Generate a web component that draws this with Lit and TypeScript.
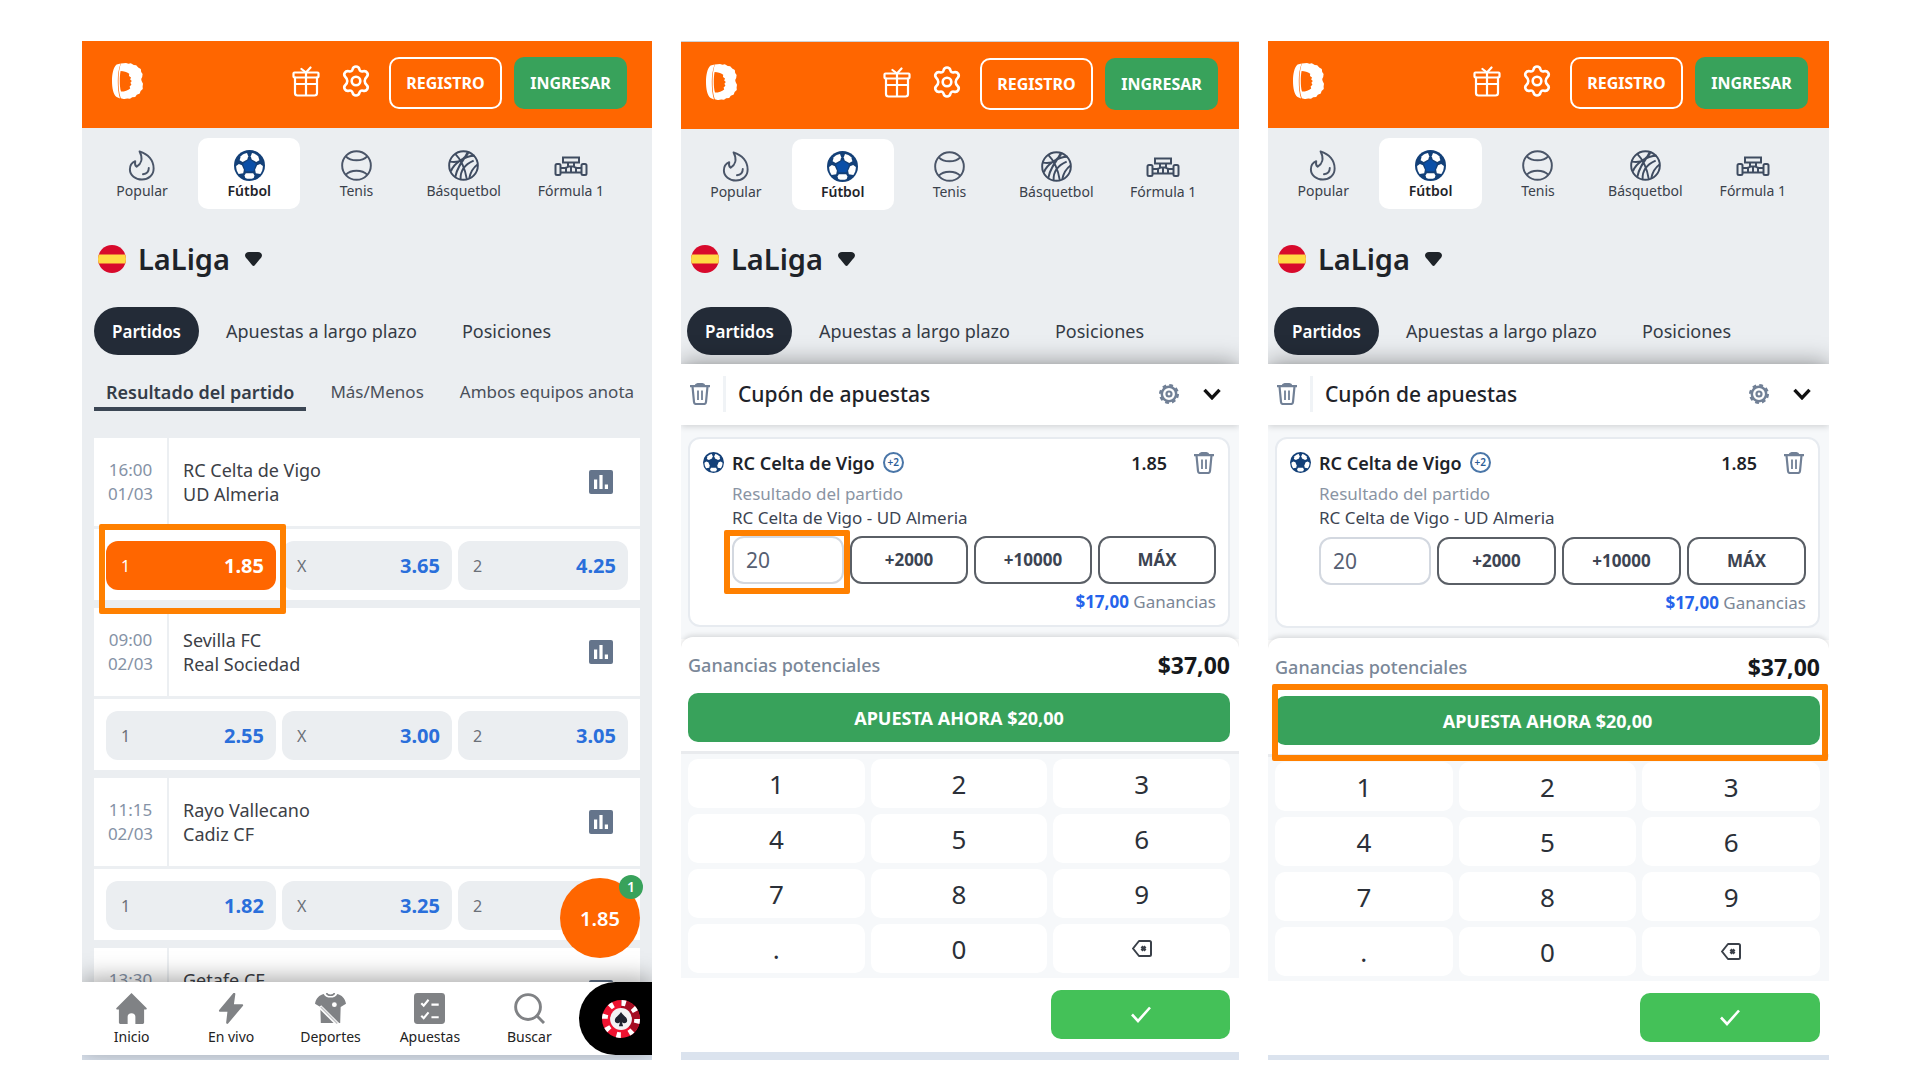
import { LitElement, html, css, nothing, type TemplateResult } from "lit";
import { customElement, property } from "lit/decorators.js";
import { classMap } from "lit/directives/class-map.js";

/* ---------- Icons ---------- */

const icons: Record<string, TemplateResult> = {
  logo: html`<svg viewBox="0 0 31 36" width="31" height="36" aria-hidden="true">
    <path fill="#fff" d="M8.600.6 4.600 1.600C1.300 4.500 0 11 0 18s1.300 13.500 4.600 16l3.400 1.400C6.300 30 5.800 24 5.800 18S6.600 6 8.600.6z"/>
    <path fill="#fff" fill-rule="evenodd" d="M8.800.6 14 0l2.500.7 2.300-.4 3 1.800 2.400.2 2 2.200 2.600 1.600.4 2.800 1.400 2.200-.4 3-1 2 .4 2 1.400 2.600-.4 2.800.2 2.400-2.200 2-.8 2.600-3 1.200-1.600 2.200-3 .4-2.200 1.400-2.800-.2-3.200.6-3.200-.8C6.900 30 6.500 24 6.500 18S7 6 8.800.6zM8.600 8C8 10.500 7.800 14.500 7.800 18s.3 7.500 1.200 10.600c3.800 0 7-1.200 9.200-3.200l-.6-2 1.800-1.600-1-2 1.400-1.800-1.600-1.600.8-2-2-1.400.2-2.200C14.600 8.800 11.800 8.100 8.600 8z"/>
  </svg>`,
  gift: html`<svg viewBox="0 0 28 31" width="28" height="31" fill="none" stroke="#fff" stroke-width="2.200" stroke-linecap="round" stroke-linejoin="round" aria-hidden="true">
    <rect x="1.500" y="6.500" width="25" height="5" rx="1"/><path d="M3 11.500V27a2.500 2.500 0 0 0 2.500 2.500h17A2.500 2.500 0 0 0 25 27V11.500M14 6.500v23M3 18h22M14 6.500 9.500 3M14 6.500 18.500 1.500"/>
  </svg>`,
  gear: html`<svg viewBox="1 0 30 32" width="32" height="32" fill="none" stroke="#fff" stroke-width="2.600" stroke-linejoin="round" aria-hidden="true">
    <path d="M12.600 4.200c.8-3.600 6-3.600 6.800 0 .4 1.900 1.900 2.700 3.700 2.100 3.500-1.100 6.200 3.200 3.500 5.700-1.400 1.300-1.900 2.700-1.900 4s.5 2.700 1.900 4c2.700 2.500 0 6.800-3.500 5.700-1.800-.6-3.300.2-3.700 2.100-.8 3.600-6 3.600-6.800 0-.4-1.900-1.900-2.700-3.700-2.100-3.500 1.100-6.200-3.200-3.500-5.700 1.400-1.300 1.900-2.700 1.900-4s-.5-2.700-1.900-4C2.700 9.500 5.400 5.200 8.900 6.300c1.800.6 3.300-.2 3.700-2.100z"/>
    <circle cx="16" cy="16" r="4.300"/>
  </svg>`,
  flame: html`<svg viewBox="0 0 28 32" width="28" height="31" fill="none" stroke="#4a5568" stroke-width="2" stroke-linecap="round" stroke-linejoin="round" aria-hidden="true">
    <path d="M11.500 1.500c9 2.500 14.500 9.500 14.500 17.500 0 7-5.300 11.500-12 11.500S1.500 26 1.500 20c0-4.200 2-7 5.500-8.500-.6 2.600-.2 4.600 1.500 5.800C13 14.500 15.500 9 11.500 1.500z"/><path d="M21 18.500c0 3.800-2.300 6-6 6.500"/>
  </svg>`,
  soccer: html`<svg viewBox="0 0 32 32" width="31" height="31" aria-hidden="true">
    <circle cx="16" cy="16" r="16" fill="#134078"/>
    <path fill="#0a4fa8" d="m16 9.500 6.600 4.800-2.500 7.700h-8.200l-2.500-7.700z"/>
    <g fill="#fff"><path d="M7 6.500c1.800-2 4-3.200 6.400-3.500l1.300 3.500-1 3.300-4.700 2.500-3.200-1.800z"/><path d="M25 6.500c-1.800-2-4-3.200-6.400-3.500l-1.300 3.500 1 3.300 4.700 2.500 3.200-1.800z"/><path d="M2.200 16.500c0 3.400 1 6 2.600 8.200l4.700-.8.7-3.400-2-4.800-3.200-1.200z"/><path d="M29.800 16.500c0 3.400-1 6-2.600 8.200l-4.700-.8-.7-3.400 2-4.800 3.200-1.200z"/><path d="M12.200 24h7.600l1.300 2.200-.8 2.600c-2.300 1.200-6.300 1.200-8.600 0l-.8-2.600z"/></g>
  </svg>`,
  tennis: html`<svg viewBox="0 0 32 32" width="31" height="31" fill="none" stroke="#4a5568" stroke-width="2" aria-hidden="true">
    <circle cx="16" cy="16" r="14.800"/><path d="M5 6.500c5 5.500 17 5.500 22 0M5 25.500c5-5.500 17-5.500 22 0"/>
  </svg>`,
  basket: html`<svg viewBox="0 0 32 32" width="31" height="31" fill="none" stroke="#3f4c61" stroke-width="2" aria-hidden="true">
    <circle cx="16" cy="16" r="14.800"/><path d="M7.500 4c5 5 10 14 12 26.500M2 12c8 1.500 15-1.500 18.500-10M3 22c3-8 14-16 24.500-16M7.500 28C9 19 14 12 21 3M13 30.500c-.5-8 3-15 13.500-19.500M22 29c1-5 3-10 8.500-14"/>
  </svg>`,
  racecar: html`<svg viewBox="0 0 34 31" width="34" height="31" fill="none" stroke="#3f4c61" stroke-width="2" aria-hidden="true">
    <rect x="1.500" y="14" width="5" height="11" rx="1.500"/><rect x="27.500" y="14" width="5" height="11" rx="1.500"/><path d="M9 7.500h16v5H9zM14 12.500v5M20 12.500v5M6.500 18h5l3-1.500h5l3 1.500h5M6.500 22.500h21M12 18v4M22 18v4M17 17v5"/>
  </svg>`,
  flag: html`<svg viewBox="0 0 28 28" width="28" height="28" aria-hidden="true">
    <clipPath id="round"><circle cx="14" cy="14" r="14"/></clipPath>
    <g clip-path="url(#round)"><path fill="#d80a2c" d="M0 0h28v28H0z"/><path fill="#ffda44" d="M0 9.500h28v9H0z"/></g>
  </svg>`,
  caret: html`<svg viewBox="0 0 17 14" width="17" height="14" aria-hidden="true">
    <path fill="#1e2329" d="M4 0h9c3 0 5 2.600 3.400 5.200-.4.700-1 1.200-1.500 1.800L10 13c-1 1.200-2 1.200-3 0L2.100 7C1.600 6.400 1 5.900.6 5.200C-1 2.600 1 0 4 0z"/>
  </svg>`,
  stats: html`<svg viewBox="0 0 24 24" width="24" height="24" aria-hidden="true">
    <rect width="24" height="24" rx="2" fill="#64748b"/><path fill="#fff" d="M5 9.500h3.200V19H5zM10.400 5h3.200v14h-3.200zM15.800 14.500H19V19h-3.200z"/>
  </svg>`,
  home: html`<svg viewBox="0 0 32 32" width="31" height="31" fill="#808285" aria-hidden="true">
    <path d="M16 0 31.500 15.500c.6.800.3 1.500-.6 1.500H29v13.500c0 .9-.6 1.500-1.500 1.500H20v-7.500c0-2.200-1.500-3.500-4-3.500s-4 1.300-4 3.500V32H4.500C3.600 32 3 31.400 3 30.500V17H1.100c-.9 0-1.200-.7-.6-1.500z"/>
  </svg>`,
  bolt: html`<svg viewBox="0 0 26 32" width="26" height="31" fill="#808285" aria-hidden="true">
    <path d="M15.500 0 .8 17.500c-.7 1 0 1.800 1 1.800h7.500L8 30.500c0 1.300 1.200 1.800 2 1L25.200 13.500c.8-1 .2-1.900-1-1.900H16L17.500 1c0-1.200-1.300-1.700-2-1z"/>
  </svg>`,
  shirt: html`<svg viewBox="0 0 32 32" width="31" height="31" aria-hidden="true">
    <path fill="#808285" d="M9 1c1.500 5 12.500 5 14 0 4.500 1 8 4.500 9 10l-5.500 3.500L26 31H6l-.5-16.500L0 11C1 5.500 4.500 2 9 1z"/>
    <path fill="none" stroke="#808285" stroke-width="1.600" d="M12 0c.5 3 7.500 3 8 0"/><path stroke="#fff" stroke-width="4" d="M5 14 24 33"/><path stroke="#c4c5c7" stroke-width="1.600" d="M6 14.500 23 31.500"/><circle cx="20" cy="12" r="2.500" fill="#fff"/>
  </svg>`,
  checklist: html`<svg viewBox="0 0 32 32" width="31" height="31" aria-hidden="true">
    <rect width="32" height="32" rx="3.500" fill="#808285"/><path fill="none" stroke="#fff" stroke-width="2.200" d="m7.500 10.500 2.500 2.500 5-6M18 12h7.500M7.500 23.500 10 26l5-6M18 25h7.500"/>
  </svg>`,
  search: html`<svg viewBox="0 0 32 32" width="31" height="31" fill="none" stroke="#808285" stroke-width="3" aria-hidden="true">
    <circle cx="14.500" cy="14.500" r="12.800"/><path d="m23 23 8 8"/>
  </svg>`,
  chip: html`<svg viewBox="0 0 40 40" width="38" height="38" aria-hidden="true">
    <circle cx="20" cy="20" r="20" fill="#ee1230"/><path fill="#a50d22" d="M20 0a20 20 0 0 1 14 34L20 20z"/>
    <circle cx="20" cy="20" r="17" fill="none" stroke="#fff" stroke-width="6" stroke-dasharray="4.600 8.752"/>
    <circle cx="20" cy="20" r="11.500" fill="#f3f3f5"/>
    <path fill="#1f2430" d="M20 12.500c2 3.500 6.500 5.500 6.500 9 0 3-3.500 3.800-5.500 2l1.200 4h-4.400l1.200-4c-2 1.800-5.500 1-5.500-2 0-3.500 4.500-5.500 6.500-9z"/>
  </svg>`,
  trash: html`<svg viewBox="0 0 20 22" width="20" height="22" fill="none" stroke="#718096" stroke-width="2.200" aria-hidden="true">
    <path d="M0 3.200h20M6 2c0-1.400 8-1.400 8 0M2.500 3.500 4 19c.1 1.300.8 2 2 2h8c1.200 0 1.900-.7 2-2l1.500-15.500"/><path stroke-width="1.800" d="M8 7.500v9.500M12 7.500v9.500"/>
  </svg>`,
  cog: html`<svg viewBox="0 0 32 32" width="20" height="20" fill="none" stroke="#718096" aria-hidden="true">
    <circle cx="16" cy="16" r="11.500" stroke-width="4"/><circle cx="16" cy="16" r="14" stroke-width="4" stroke-dasharray="6 4.996"/><circle cx="16" cy="16" r="4" stroke-width="3.500"/>
  </svg>`,
  chevron: html`<svg viewBox="0 0 18 12" width="18" height="12" fill="none" stroke="#111" stroke-width="3.400" aria-hidden="true">
    <path d="m1.500 1.800 7.500 8 7.500-8"/>
  </svg>`,
  backspace: html`<svg viewBox="0 0 20 17" width="20" height="17" fill="none" stroke="#3a4049" stroke-width="2" stroke-linejoin="round" aria-hidden="true">
    <path d="M7 1h10.500c.9 0 1.500.6 1.500 1.500v12c0 .9-.6 1.500-1.500 1.500H7L1 8.500z"/><path d="m9.500 6.500 4 4m0-4-4 4" stroke-width="2.600"/>
  </svg>`,
  check: html`<svg viewBox="0 0 20 17" width="20" height="17" fill="none" stroke="#fff" stroke-width="2.600" aria-hidden="true">
    <path d="m1 8.500 6 6.500L19 1.500"/>
  </svg>`,
};

const smallBall = html`<svg viewBox="0 0 32 32" width="21" height="21" aria-hidden="true">
  <circle cx="16" cy="16" r="16" fill="#134078"/>
  <g fill="#fff"><path d="M7 6.500c1.800-2 4-3.200 6.400-3.500l1.300 3.500-1 3.300-4.700 2.500-3.200-1.800z"/><path d="M25 6.500c-1.800-2-4-3.200-6.400-3.500l-1.300 3.500 1 3.300 4.700 2.500 3.200-1.800z"/><path d="M2.200 16.500c0 3.400 1 6 2.600 8.200l4.700-.8.7-3.400-2-4.800-3.200-1.200z"/><path d="M29.800 16.500c0 3.400-1 6-2.600 8.200l-4.700-.8-.7-3.400 2-4.800 3.200-1.200z"/><path d="M12.200 24h7.600l1.300 2.200-.8 2.600c-2.300 1.200-6.300 1.200-8.600 0l-.8-2.600z"/></g>
</svg>`;

/* ---------- Shared styles ---------- */

const base = css`
  *, *::before, *::after { box-sizing: border-box; }
  :host { display: block; font-family: "Noto Sans", "Open Sans", sans-serif; color: #1e2329; }
  button, input { font: inherit; color: inherit; margin: 0; padding: 0; border: 0; background: none; }
  button { cursor: pointer; }
  a { color: inherit; text-decoration: none; }
  h2, h3, p { margin: 0; font: inherit; }
  svg { display: block; flex: none; }
  .marked { position: relative; }
  .marked::after {
    content: "";
    position: absolute;
    inset: var(--mark);
    border: 6px solid #ff8000;
    border-radius: 2px;
    pointer-events: none;
    z-index: 2;
  }
`;

/* ---------- Top of every screen: brand bar, sports, league, sections ---------- */

const sports = [
  { icon: "flame", name: "Popular" },
  { icon: "soccer", name: "Fútbol", active: true },
  { icon: "tennis", name: "Tenis" },
  { icon: "basket", name: "Básquetbol" },
  { icon: "racecar", name: "Fórmula 1" },
];

@customElement("league-header")
class LeagueHeader extends LitElement {
  static styles = [
    base,
    css`
      .brand { display: flex; align-items: center; height: calc(87px + var(--rim, 0px)); background: #ff6600; border-top: var(--rim, 0px) solid #cfd2d6; padding: 0 var(--brand-right, 21px) 7px var(--brand-left, 25px); }
      .tools { display: flex; align-items: center; margin-left: auto; gap: 20px; }
      .auth { display: flex; gap: 12px; margin: 4px 0 0 -3px; }
      .auth button { height: 52px; width: 113px; border-radius: 10px; color: #fff; font-weight: 700; font-size: 16px; }
      .auth .register { border: 2px solid #fff; }
      .auth .login { background: #38a25b; }
      .sports { display: grid; grid-template-columns: repeat(5, minmax(0, 1fr)); gap: 5px; padding: 10px var(--sports-right, 25px) 0 var(--sports-left, 4px); }
      .sport { display: flex; flex-direction: column; align-items: center; height: 71px; padding-top: 12px; border-radius: 10px; font-size: 14px; line-height: 20px; color: #3a414b; }
      .sport.active { background: #fff; font-weight: 600; color: #1e2329; }
      .league { display: flex; align-items: center; gap: 12px; height: 40px; margin-top: calc(30px - var(--rim, 0px)); padding-left: var(--league-left, 10px); }
      .league h2 { font-size: 29px; font-weight: 600; line-height: 40px; margin-right: 3px; }
      .sections { display: flex; gap: 9px; margin-top: 28px; padding-left: var(--edge, 6px); }
      .section { height: 48px; padding: 0 18px; border-radius: 24px; font-size: 18px; white-space: nowrap; color: #343b45; }
      .section.active { background: #232b37; color: #fff; font-weight: 600; font-size: 17px; }
    `,
  ];

  render() {
    return html`
      <header class="brand">
        <a href="#" aria-label="Inicio">${icons.logo}</a>
        <div class="tools">
          <button aria-label="Promociones">${icons.gift}</button>
          <button aria-label="Ajustes">${icons.gear}</button>
          <div class="auth">
            <button class="register">REGISTRO</button>
            <button class="login">INGRESAR</button>
          </div>
        </div>
      </header>
      <nav class="sports">
        ${sports.map(
          (s) => html`<button class=${classMap({ sport: true, active: !!s.active })}>${icons[s.icon]}<span>${s.name}</span></button>`
        )}
      </nav>
      <div class="league">${icons.flag}<h2>LaLiga</h2><button aria-label="Cambiar liga">${icons.caret}</button></div>
      <nav class="sections">
        <button class="section active">Partidos</button>
        <button class="section">Apuestas a largo plazo</button>
        <button class="section">Posiciones</button>
      </nav>
    `;
  }
}

/* ---------- Match card ---------- */

interface Match {
  time: string;
  date?: string;
  home: string;
  away?: string;
  odds?: string[];
  picked?: number;
}

@customElement("match-card")
class MatchCard extends LitElement {
  @property({ attribute: false }) match!: Match;

  static styles = [
    base,
    css`
      :host { background: #fff; }
      .info { display: grid; grid-template-columns: 75px 1fr auto; align-items: center; height: 91px; border-bottom: 3px solid #eceff2; font-size: 17px; line-height: 24px; }
      .when { display: flex; flex-direction: column; justify-content: center; height: 100%; text-align: center; color: #8592a6; border-right: 2px solid #eceff2; }
      .line { display: block; min-height: 24px; }
      .teams { padding-left: 14px; font-size: 18px; color: #3c4046; }
      .stats { margin-right: 27px; }
      .odds { display: grid; grid-template-columns: repeat(3, minmax(0, 1fr)); gap: 6px; padding: 12px 12px 10px; }
      .odd { display: flex; justify-content: space-between; align-items: center; height: 49px; padding: 0 12px 0 15px; border-radius: 12px; background: #ebeef1; font-size: 16px; color: #6b7078; }
      .odd strong { font-size: 20px; font-weight: 700; color: #2a6fdb; }
      .odd.picked { background: #ff6600; color: #fff; --mark: -17px -10px -24px -7px; }
      .odd.picked strong { color: #fff; }
    `,
  ];

  render() {
    const m = this.match;
    return html`
      <div class="info">
        <div class="when"><span class="line">${m.time}</span><span class="line">${m.date}</span></div>
        <div class="teams"><span class="line">${m.home}</span><span class="line">${m.away}</span></div>
        <button class="stats" aria-label="Estadísticas">${icons.stats}</button>
      </div>
      ${m.odds
        ? html`<div class="odds">
            ${["1", "X", "2"].map((label, i) => {
              const picked = m.picked === i;
              return html`<button class=${classMap({ odd: true, picked, marked: picked })}>
                <span>${label}</span><strong>${m.odds?.[i]}</strong>
              </button>`;
            })}
          </div>`
        : nothing}
    `;
  }
}

/* ---------- Screen 1: list of matches ---------- */

const matches: Match[] = [
  { time: "16:00", date: "01/03", home: "RC Celta de Vigo", away: "UD Almeria", odds: ["1.85", "3.65", "4.25"], picked: 0 },
  { time: "09:00", date: "02/03", home: "Sevilla FC", away: "Real Sociedad", odds: ["2.55", "3.00", "3.05"] },
  { time: "11:15", date: "02/03", home: "Rayo Vallecano", away: "Cadiz CF", odds: ["1.82", "3.25"] },
  { time: "13:30", home: "Getafe CF" },
];

const destinations = [
  { icon: "home", name: "Inicio" },
  { icon: "bolt", name: "En vivo" },
  { icon: "shirt", name: "Deportes" },
  { icon: "checklist", name: "Apuestas" },
  { icon: "search", name: "Buscar" },
];

@customElement("match-screen")
class MatchScreen extends LitElement {
  static styles = [
    base,
    css`
      :host { display: flex; flex-direction: column; min-height: 0; overflow: hidden; background: #ebeef1; --edge: 12px; --sports-left: 9px; --sports-right: 30px; --league-left: 16px; --brand-left: 30px; --brand-right: 25px; }
      .markets { display: flex; gap: 12px; margin: 19px 10px 0 12px; overflow: hidden; }
      .market { flex: none; height: 37px; padding: 3px 12px 0; border-bottom: 4px solid transparent; font-size: 17px; line-height: 30px; color: #4a505a; }
      .market:last-child { padding-right: 0; }
      .market.active { font-size: 18px; font-weight: 600; color: #343c48; border-color: #3b4654; }
      .list { flex: 1; min-height: 0; overflow: hidden; display: flex; flex-direction: column; gap: 8px; margin-top: 27px; padding: 0 12px; }
      match-card { flex: none; }
      .dock { position: relative; display: flex; height: 73px; background: #fff; box-shadow: 0 -4px 22px rgba(0, 0, 0, 0.35); }
      .tabs { flex: 1; display: grid; grid-template-columns: repeat(5, 1fr); padding-top: 11px; }
      .tab { display: flex; flex-direction: column; align-items: center; gap: 3px; font-size: 14px; line-height: 20px; color: #222; }
      .casino { width: 73px; display: flex; align-items: center; justify-content: flex-end; padding-right: 12px; background: #000; border-radius: 37px 0 0 37px; }
      .slip { position: absolute; right: 12px; bottom: 97px; width: 80px; height: 80px; border-radius: 50%; background: #ff6600; color: #fff; font-size: 20px; font-weight: 600; }
      .count { position: absolute; top: -3px; right: -3px; width: 24px; height: 24px; border-radius: 50%; background: #38a25b; font-size: 14px; line-height: 24px; }
      .foot { height: 5px; background: #dbe3ee; }
    `,
  ];

  render() {
    return html`
      <league-header></league-header>
      <nav class="markets">
        <button class="market active">Resultado del partido</button>
        <button class="market">Más/Menos</button>
        <button class="market">Ambos equipos anota</button>
      </nav>
      <div class="list">${matches.map((m) => html`<match-card .match=${m}></match-card>`)}</div>
      <div class="dock">
        <nav class="tabs">
          ${destinations.map((d) => html`<a class="tab" href="#">${icons[d.icon]}<span>${d.name}</span></a>`)}
        </nav>
        <a class="casino" href="#" aria-label="Casino">${icons.chip}</a>
        <button class="slip">1.85<span class="count">1</span></button>
      </div>
      <div class="foot"></div>
    `;
  }
}

/* ---------- Screens 2 and 3: bet slip ---------- */

const keys = ["1", "2", "3", "4", "5", "6", "7", "8", "9", ".", "0"];

@customElement("slip-screen")
class SlipScreen extends LitElement {
  @property() highlight: "stake" | "submit" = "stake";

  static styles = [
    base,
    css`
      :host { display: flex; flex-direction: column; min-height: 0; overflow: hidden; background: #ebeef1; }
      :host([highlight="stake"]) { --rim: 1px; }
      .sheet { flex: 1; min-height: 0; display: flex; flex-direction: column; margin-top: 9px; background: #fff; box-shadow: 0 -2px 22px rgba(0, 0, 0, 0.35); position: relative; }
      .title { display: flex; align-items: center; height: 61px; padding: 0 18px 2px 9px; position: relative; box-shadow: 0 2px 6px rgba(0, 0, 0, 0.14); }
      .title h2 { margin-left: 13px; padding-left: 12px; border-left: 3px solid #f0f3f6; font-size: 21px; font-weight: 500; line-height: 36px; margin-right: auto; }
      .title .cog { margin-right: 24px; }
      .body { background: #f6f8fa; padding: 12px 9px 12px 7px; }
      .bet { border: 2px solid #e7ebf0; border-radius: 12px; background: #fff; padding: 11px 12px 11px 13px; }
      .pick { display: flex; align-items: center; height: 25px; padding-right: 2px; font-size: 18px; font-weight: 600; }
      .pick svg { margin-right: 8px; }
      .pick .odds { margin-left: auto; margin-right: 27px; }
      .pick button svg { margin: 0; }
      .plus { margin-left: 8px; width: 21px; height: 21px; border: 2px solid #4a76a8; border-radius: 50%; color: #2b5c97; font-size: 10px; line-height: 17px; text-align: center; }
      .details { padding-left: 29px; font-size: 17px; line-height: 24px; color: #3c4452; }
      .market { color: #8a94a3; margin-top: 7px; }
      .stakes { display: grid; grid-template-columns: 112px 1fr 1fr 1fr; gap: 6px; margin-top: 6px; }
      .stakes.roomy { margin-top: 7px; }
      .stake { height: 48px; border: 2px solid #d3d8e0; border-radius: 12px; display: flex; --mark: -8px -8px -12px -10px; }
      .stake input { width: 100%; padding: 0 12px; font-size: 21px; color: #566072; outline: none; border-radius: 10px; }
      .quick { height: 48px; border: 2px solid #5a5f66; border-radius: 12px; font-size: 17px; font-weight: 700; }
      .win { margin-top: 6px; text-align: right; color: #7b8696; }
      .win strong { color: #2563eb; font-weight: 700; }
      .totals { margin-top: -2px; background: #fff; border-radius: 12px 12px 0 0; box-shadow: 0 -2px 5px rgba(0, 0, 0, 0.12); padding: 0 9px 0 7px; }
      .sum { display: flex; justify-content: space-between; align-items: center; height: 56px; font-size: 18px; font-weight: 500; color: #7a8798; }
      .sum.roomy { height: 58px; }
      .sum strong { font-size: 23px; font-weight: 700; color: #15181c; }
      .bet-now { display: block; width: 100%; height: 49px; margin-bottom: 9px; border-radius: 10px; background: #38a25b; color: #fff; font-size: 18px; font-weight: 700; --mark: -12px -8px -16px -3px; }
      .pad { display: grid; grid-template-columns: repeat(3, minmax(0, 1fr)); gap: 6px; background: #f6f8fa; border-top: 3px solid #e9ebee; padding: 5px 9px 5px 7px; }
      .key { display: flex; align-items: center; justify-content: center; height: 49px; border-radius: 10px; background: #fff; font-size: 26px; color: #2b3038; }
      .done { flex: 1; min-height: 0; display: grid; grid-template-columns: repeat(3, minmax(0, 1fr)); gap: 4px; padding: 12px 9px 0 5px; }
      .confirm { grid-column: 3; display: flex; align-items: center; justify-content: center; height: 49px; border-radius: 10px; background: #44c158; }
      .foot { height: 8px; background: #dbe3ee; }
      .foot.thin { height: 5px; }
    `,
  ];

  render() {
    const stake = this.highlight === "stake";
    return html`
      <league-header></league-header>
      <section class="sheet">
        <div class="title">
          <button aria-label="Vaciar cupón">${icons.trash}</button>
          <h2>Cupón de apuestas</h2>
          <button class="cog" aria-label="Ajustes del cupón">${icons.cog}</button>
          <button aria-label="Cerrar cupón">${icons.chevron}</button>
        </div>
        <div class="body">
          <article class="bet">
            <div class="pick">
              ${smallBall}<h3>RC Celta de Vigo</h3><span class="plus">+2</span>
              <span class="odds">1.85</span>
              <button aria-label="Quitar apuesta">${icons.trash}</button>
            </div>
            <div class="details">
              <p class="market">Resultado del partido</p>
              <p>RC Celta de Vigo - UD Almeria</p>
              <div class=${classMap({ stakes: true, roomy: !stake })}>
                <label class=${classMap({ stake: true, marked: stake })}>
                  <input type="text" inputmode="decimal" aria-label="Importe" .value=${"20"} />
                </label>
                <button class="quick">+2000</button>
                <button class="quick">+10000</button>
                <button class="quick">MÁX</button>
              </div>
              <p class="win"><strong>$17,00</strong> Ganancias</p>
            </div>
          </article>
        </div>
        <div class="totals">
          <div class=${classMap({ sum: true, roomy: !stake })}><span>Ganancias potenciales</span><strong>$37,00</strong></div>
          <button class=${classMap({ "bet-now": true, marked: !stake })}>APUESTA AHORA $20,00</button>
        </div>
        <div class="pad">
          ${keys.map((k) => html`<button class="key">${k}</button>`)}
          <button class="key" aria-label="Borrar">${icons.backspace}</button>
        </div>
        <div class="done"><button class="confirm" aria-label="Confirmar">${icons.check}</button></div>
        <div class=${classMap({ foot: true, thin: !stake })}></div>
      </section>
    `;
  }
}

/* ---------- Page ---------- */

@customElement("app-root")
class AppRoot extends LitElement {
  static styles = [
    base,
    css`
      .page {
        display: grid;
        grid-template-columns: 570fr 558fr 561fr;
        grid-template-rows: minmax(0, 1fr);
        gap: 29px;
        height: 100vh;
        min-height: 1000px;
        padding: 41px 91px 20px 82px;
        background: #fff;
      }
      .page > * { min-width: 0; }
    `,
  ];

  render() {
    return html`
      <main class="page">
        <match-screen></match-screen>
        <slip-screen highlight="stake"></slip-screen>
        <slip-screen highlight="submit"></slip-screen>
      </main>
    `;
  }
}
